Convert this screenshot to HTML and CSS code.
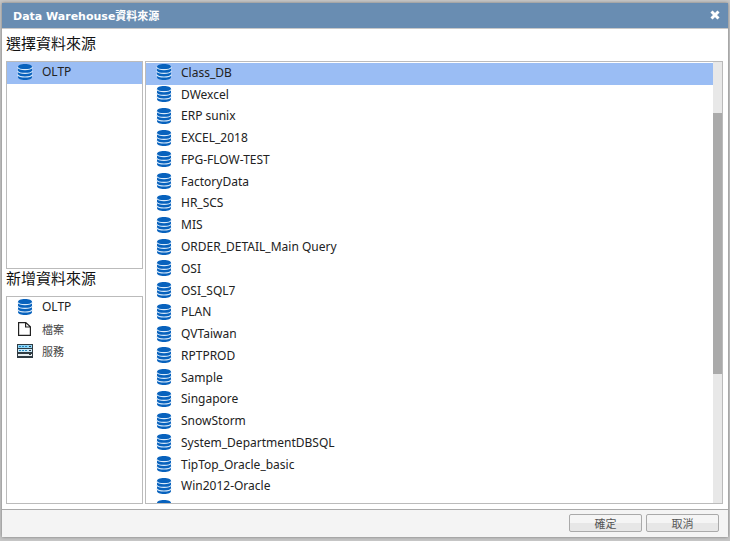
FILE: index.html
```html
<!DOCTYPE html>
<html lang="zh-Hant">
<head>
<meta charset="utf-8">
<title>Data Warehouse資料來源</title>
<link rel="stylesheet" href="styles.css">
</head>
<body>
<svg class="defs" aria-hidden="true">
  <symbol id="db" viewBox="0 0 16 16">
    <path fill="#0862bd" d="M1 3C1 1.200 3.800 0 8 0s7 1.200 7 3v10c0 1.800-2.800 3-7 3s-7-1.200-7-3z"/>
    <path fill="none" stroke="#d9eafa" stroke-width="1.100" d="M.5 3.200C2 5.300 5 5.600 8 5.600s6-.3 7.500-2.400M.5 7C2 9.100 5 9.400 8 9.400s6-.3 7.500-2.400M.5 10.600C2 12.700 5 13 8 13s6-.3 7.500-2.400"/>
  </symbol>
  <symbol id="file" viewBox="0 0 16 16">
    <path fill="#fff" stroke="#222" stroke-width="1.200" d="M1.600 1.600h7.200l4.600 4.200v8.600H1.600zM8.600 1.600v4.400h4.800"/>
  </symbol>
  <symbol id="server" viewBox="0 0 16 16">
    <path fill="#303b42" d="M0 1h16v14H0z"/>
    <path fill="#8fd6f8" d="M1 2h14v3H1z"/>
    <path fill="#c9ebfb" d="M1 6h14v3H1z"/>
    <path fill="#e8eef0" d="M1 11h14v2H1z"/>
    <path stroke="#2487bd" stroke-dasharray="2 1" d="M2 3.500h8M2 7.500h8"/>
    <path fill="#303b42" d="M12 3h2v1h-2zM12 7h2v1h-2zM12 11h2v1h-2z"/>
  </symbol>
</svg>
<main class="dialog" role="dialog" aria-labelledby="title">
  <header class="titlebar">
    <h1 id="title">Data Warehouse資料來源</h1>
    <button class="close" type="button" aria-label="關閉"><svg viewBox="0 0 10 10"><path d="M1.500 1.500l7 7M8.500 1.500l-7 7"/></svg></button>
  </header>
  <div class="content">
    <h2>選擇資料來源</h2>
    <div class="columns">
      <div class="side">
        <ul class="box types">
          <li class="item selected"><svg class="icon"><use href="#db"/></svg>OLTP</li>
        </ul>
        <h2 class="second">新增資料來源</h2>
        <ul class="box types">
          <li class="item"><svg class="icon"><use href="#db"/></svg>OLTP</li>
          <li class="item cjk"><svg class="icon"><use href="#file"/></svg>檔案</li>
          <li class="item cjk"><svg class="icon"><use href="#server"/></svg>服務</li>
        </ul>
      </div>
      <div class="box sources">
        <ul class="list">
          <li class="item selected"><svg class="icon"><use href="#db"/></svg>Class_DB</li>
          <li class="item"><svg class="icon"><use href="#db"/></svg>DWexcel</li>
          <li class="item"><svg class="icon"><use href="#db"/></svg>ERP sunix</li>
          <li class="item"><svg class="icon"><use href="#db"/></svg>EXCEL_2018</li>
          <li class="item"><svg class="icon"><use href="#db"/></svg>FPG-FLOW-TEST</li>
          <li class="item"><svg class="icon"><use href="#db"/></svg>FactoryData</li>
          <li class="item"><svg class="icon"><use href="#db"/></svg>HR_SCS</li>
          <li class="item"><svg class="icon"><use href="#db"/></svg>MIS</li>
          <li class="item"><svg class="icon"><use href="#db"/></svg>ORDER_DETAIL_Main Query</li>
          <li class="item"><svg class="icon"><use href="#db"/></svg>OSI</li>
          <li class="item"><svg class="icon"><use href="#db"/></svg>OSI_SQL7</li>
          <li class="item"><svg class="icon"><use href="#db"/></svg>PLAN</li>
          <li class="item"><svg class="icon"><use href="#db"/></svg>QVTaiwan</li>
          <li class="item"><svg class="icon"><use href="#db"/></svg>RPTPROD</li>
          <li class="item"><svg class="icon"><use href="#db"/></svg>Sample</li>
          <li class="item"><svg class="icon"><use href="#db"/></svg>Singapore</li>
          <li class="item"><svg class="icon"><use href="#db"/></svg>SnowStorm</li>
          <li class="item"><svg class="icon"><use href="#db"/></svg>System_DepartmentDBSQL</li>
          <li class="item"><svg class="icon"><use href="#db"/></svg>TipTop_Oracle_basic</li>
          <li class="item"><svg class="icon"><use href="#db"/></svg>Win2012-Oracle</li>
          <li class="item"><svg class="icon"><use href="#db"/></svg></li>
        </ul>
        <div class="track"><div class="thumb"></div></div>
      </div>
    </div>
  </div>
  <footer class="actions">
    <button class="btn" type="button">確定</button>
    <button class="btn" type="button">取消</button>
  </footer>
</main>
</body>
</html>
```
FILE: styles.css
```css
* { box-sizing: border-box; }
body {
  margin: 0;
  height: 100vh;
  padding: 3px 2px 4px;
  display: flex;
  background: #c6c6c6;
  color: #222;
  font: 12px "Noto Sans", "Noto Sans CJK TC", sans-serif;
}
.defs { position: absolute; width: 0; height: 0; }
h1, h2, ul { margin: 0; padding: 0; }
ul { list-style: none; }
.dialog {
  flex: 1;
  display: flex;
  flex-direction: column;
  min-height: 0;
  background: #fff;
  box-shadow: 0 0 3px #777;
}
.titlebar {
  height: 26px;
  flex: none;
  display: flex;
  align-items: center;
  justify-content: space-between;
  padding: 0 8px 2px 11px;
  background: #698db2;
  border-bottom: 1px solid #c8c8c8;
  color: #fff;
}
h1 { font: bold 11px "DejaVu Sans", "Noto Sans CJK TC", sans-serif; }
.close { width: 10px; height: 10px; padding: 0; border: 0; background: none; display: flex; }
.close svg { width: 10px; height: 10px; fill: none; stroke: #fff; stroke-width: 3; }
.content {
  flex: 1;
  min-height: 0;
  display: flex;
  flex-direction: column;
  padding: 0 5px 5px 4px;
}
h2 { font: 15px/28px "Noto Sans CJK TC", sans-serif; height: 32px; color: #111; }
h2.second { height: 27px; line-height: 18px; }
.columns { flex: 1; min-height: 0; display: flex; gap: 2px; }
.side { width: 137px; display: flex; flex-direction: column; }
.box { border: 1px solid #bbb; background: #fff; }
.types { flex: 1; }
.item { height: 22px; display: flex; align-items: center; gap: 9px; padding: 0 10px 3px; white-space: nowrap; }
.cjk { font-size: 11px; color: #444; }
.selected { background: #9abdf4; }
.icon { width: 16px; height: 16px; flex: none; }
.sources { flex: 1; display: flex; overflow: hidden; }
.list { flex: 1; height: calc(100% + 17px); padding-top: 1px; display: flex; flex-direction: column; }
.list .item { flex: 1; min-height: 0; height: auto; }
.track { width: 9px; background: #e8e8e8; padding-top: 51px; }
.thumb { height: 67%; background: #aaa; }
.actions {
  height: 28px;
  flex: none;
  display: flex;
  justify-content: flex-end;
  gap: 4px;
  padding: 4px 9px;
  background: #f4f4f4;
  border-top: 1px solid #aaa;
}
.btn {
  width: 73px;
  height: 18px;
  padding: 0;
  border: 1px solid #aaa;
  border-radius: 2px;
  background: linear-gradient(#f5f5f5 50%, #e7e7e7 50%);
  color: #555;
  font: 11px/16px "Noto Sans CJK TC", sans-serif;
}
```
